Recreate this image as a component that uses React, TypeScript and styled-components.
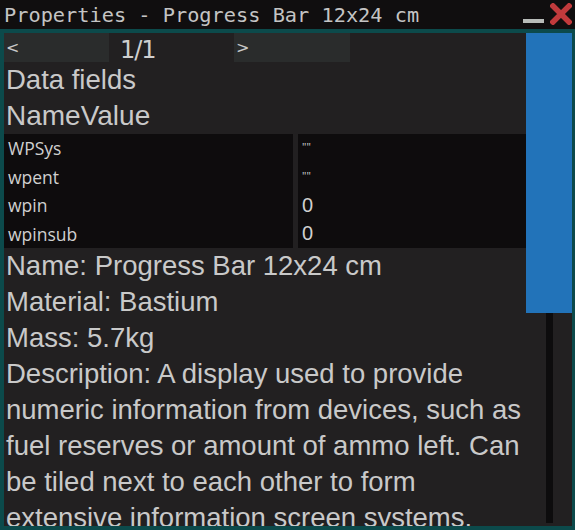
import { Fragment } from 'react';
import styled, { createGlobalStyle } from 'styled-components';

const GlobalStyle = createGlobalStyle`
  html, body {
    margin: 0;
    padding: 0;
    background: #100e0f;
  }
  #root {
    width: 575px;
    height: 530px;
  }
`;

const Window = styled.div`
  display: flex;
  flex-direction: column;
  width: 575px;
  height: 530px;
  background: #100e0f;
  overflow: hidden;
`;

const TitleBar = styled.div`
  display: flex;
  align-items: center;
  height: 29px;
  padding: 0 3px 0 4px;
  flex-shrink: 0;
`;

const Title = styled.div`
  flex: 1;
  font-family: 'DejaVu Sans Mono', monospace;
  font-size: 20.3px;
  color: #c4c4c4;
  white-space: nowrap;
  line-height: 30px;
`;

const TitleButtons = styled.div`
  display: flex;
  align-items: flex-end;
  gap: 6px;
  height: 26px;
`;

const Minimize = styled.div`
  width: 21px;
  height: 4px;
  margin-bottom: 5px;
  background: #b8bcb9;
`;

const Frame = styled.div`
  flex: 1;
  display: flex;
  border: solid #0c4a4b;
  border-width: 4px 3px 4px 4px;
  background: #222021;
  overflow: hidden;
`;

const Main = styled.div`
  flex: 1;
  min-width: 0;
  overflow: hidden;
  color: #c9c9c9;
  font-family: 'Liberation Sans', Arial, sans-serif;
`;

const Pager = styled.div`
  display: flex;
  height: 29px;
`;

const PageButton = styled.div<{ $width: number }>`
  width: ${(p) => p.$width}px;
  background: #2a2c2c;
  font-family: 'DejaVu Sans', sans-serif;
  font-size: 16px;
  line-height: 29px;
  padding-left: 2px;
  box-sizing: border-box;
  color: #c9c9c9;
`;

const PageLabel = styled.div`
  width: 125px;
  padding-left: 11px;
  box-sizing: border-box;
  font-size: 24px;
  line-height: 34px;
  font-family: 'DejaVu Sans', sans-serif;
  letter-spacing: -1px;
  color: #cfcfcf;
`;

const Heading = styled.div<{ $size: number; $height: number }>`
  font-size: ${(p) => p.$size}px;
  line-height: ${(p) => p.$height}px;
  padding-left: 2px;
  white-space: nowrap;
`;

const FieldTable = styled.div`
  display: grid;
  grid-template-columns: 289px 228px;
  column-gap: 5px;
  background: #222021;
`;

const Cell = styled.div<{ $tiny?: boolean }>`
  background: #0e0c0d;
  height: 28.5px;
  display: flex;
  align-items: ${(p) => (p.$tiny ? 'flex-start' : 'center')};
  box-sizing: border-box;
  padding-left: 4px;
  padding-top: ${(p) => (p.$tiny ? '7px' : '0')};
  font-family: 'Open Sans', 'Noto Sans', sans-serif;
  font-size: ${(p) => (p.$tiny ? '11px' : '17.5px')};
  line-height: ${(p) => (p.$tiny ? '11px' : 'normal')};
  color: #d0d0d0;
`;

const ValueNumber = styled.span`
  font-family: 'Liberation Sans', Arial, sans-serif;
  font-size: 20px;
`;

const Details = styled.div`
  padding-left: 2px;
  padding-right: 4px;
  font-size: 27.5px;
  line-height: 36px;
`;

const ScrollTrack = styled.div`
  width: 46px;
  flex-shrink: 0;
  display: flex;
  flex-direction: column;
  align-items: center;
`;

const ScrollThumb = styled.div`
  width: 46px;
  height: 280px;
  background: #2273b9;
  flex-shrink: 0;
`;

const ScrollRail = styled.div`
  width: 7px;
  flex: 1;
  margin-bottom: 3px;
  background: #0d0c0d;
`;

const rows = [
  { name: 'WPSys', value: '""', tiny: true },
  { name: 'wpent', value: '""', tiny: true },
  { name: 'wpin', value: '0', tiny: false },
  { name: 'wpinsub', value: '0', tiny: false },
];

const CloseIcon = () => (
  <svg width="22" height="22" viewBox="0 0 22 22" style={{ marginBottom: 3 }}>
    <path d="M3 3 L19 19 M19 3 L3 19" stroke="#c13a3c" strokeWidth="5.5" strokeLinecap="square" />
  </svg>
);

const App = () => (
  <>
    <GlobalStyle />
    <Window>
      <TitleBar>
        <Title>Properties - Progress Bar 12x24 cm</Title>
        <TitleButtons>
          <Minimize />
          <CloseIcon />
        </TitleButtons>
      </TitleBar>
      <Frame>
        <Main>
          <Pager>
            <PageButton $width={105}>&lt;</PageButton>
            <PageLabel>1/1</PageLabel>
            <PageButton $width={116}>&gt;</PageButton>
          </Pager>
          <Heading $size={27.5} $height={36}>Data fields</Heading>
          <Heading $size={28} $height={36}>NameValue</Heading>
          <FieldTable>
            {rows.map((r) => (
              <Fragment key={r.name}>
                <Cell>{r.name}</Cell>
                <Cell $tiny={r.tiny}>
                  {r.tiny ? r.value : <ValueNumber>{r.value}</ValueNumber>}
                </Cell>
              </Fragment>
            ))}
          </FieldTable>
          <Details>
            <div>Name: Progress Bar 12x24 cm</div>
            <div>Material: Bastium</div>
            <div>Mass: 5.7kg</div>
            <div>
              Description: A display used to provide numeric information from devices, such as fuel
              reserves or amount of ammo left. Can be tiled next to each other to form extensive
              information screen systems.
            </div>
          </Details>
        </Main>
        <ScrollTrack>
          <ScrollThumb />
          <ScrollRail />
        </ScrollTrack>
      </Frame>
    </Window>
  </>
);

export default App;
